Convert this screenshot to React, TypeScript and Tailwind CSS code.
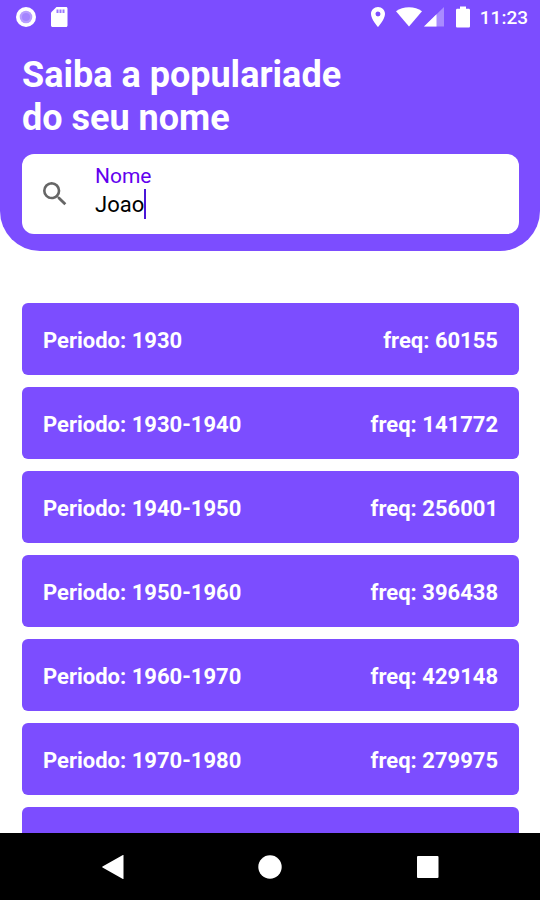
import React from "react";
import { MdLocationOn, MdSearch } from "react-icons/md";

interface Period {
  label: string;
  freq: number;
}

const periods: Period[] = [
  { label: "1930", freq: 60155 },
  { label: "1930-1940", freq: 141772 },
  { label: "1940-1950", freq: 256001 },
  { label: "1950-1960", freq: 396438 },
  { label: "1960-1970", freq: 429148 },
  { label: "1970-1980", freq: 279975 },
];

function StatusBar() {
  return (
    <div className="flex h-9 items-center justify-between pl-4 pr-3 text-white">
      <div className="flex items-center gap-3.5 pb-0.5">
        <svg className="size-5" viewBox="0 0 20 20">
          <circle cx="10" cy="10" r="10" fill="#fff" />
          <circle cx="10" cy="10" r="6.3" fill="#b89eff" />
          <circle cx="10" cy="10" r="4" fill="#a485ff" />
        </svg>
        <svg className="h-5 w-[18px]" viewBox="0 0 18 20">
          <path d="M6.500 0H16c.9 0 1.500.7 1.500 1.500v17c0 .8-.6 1.500-1.500 1.500H2.500C1.700 20 1 19.300 1 18.500V5.500z" fill="#fff" />
          <path d="M6.500 2.500h2v3.500h-2zM9.500 2.500h2v3.500h-2zM12.500 2.500h2v3.500h-2z" fill="#9a78ff" />
        </svg>
      </div>
      <div className="flex items-center">
        <div className="flex items-center pb-0.5">
          <MdLocationOn className="mr-1.5 size-6" />
          <svg className="mr-0.5 h-5 w-[26px]" viewBox="0 0 26 20" fill="currentColor">
            <path d="M13 19.5 0 4.2C3.6 1.6 8 .3 13 .3s9.4 1.3 13 3.9z" />
          </svg>
          <svg className="mr-3 h-5 w-5" viewBox="0 0 20 20" fill="currentColor">
            <path d="M20 0v19.5H0z" opacity=".35" />
            <path d="M12.5 7.3v12.2H0z" />
          </svg>
          <svg className="mr-2.5 h-[22px] w-3.5" viewBox="0 0 14 22" fill="currentColor">
            <path d="M4 .5h6v2.2h2.7c.7 0 1.3.6 1.3 1.3v16.2c0 .7-.6 1.3-1.3 1.3H1.3C.6 21.5 0 20.9 0 20.2V4c0-.7.6-1.3 1.3-1.3H4z" />
          </svg>
        </div>
        <span className="text-[19px] font-medium leading-6">11:23</span>
      </div>
    </div>
  );
}

function NavBar() {
  return (
    <nav className="flex h-[67px] shrink-0 items-center justify-center gap-[134px] bg-black">
      <button aria-label="Voltar">
        <svg className="size-6" viewBox="0 0 24 24" fill="#fff">
          <path d="M23.5.3v23.4c0 .3-.3.4-.6.3L2.5 12.5c-.4-.2-.4-.8 0-1L22.9 0c.3-.1.6 0 .6.3z" />
        </svg>
      </button>
      <button aria-label="Início">
        <svg className="size-6" viewBox="0 0 24 24" fill="#fff">
          <circle cx="12" cy="12" r="11.7" />
        </svg>
      </button>
      <button aria-label="Recentes">
        <svg className="size-6" viewBox="0 0 24 24" fill="#fff">
          <rect x="1" y="1" width="21.5" height="22" rx="1" />
        </svg>
      </button>
    </nav>
  );
}

function App() {
  return (
    <div className="flex h-screen flex-col overflow-hidden bg-white font-[Roboto,sans-serif]">
      <header className="shrink-0 rounded-b-[40px] bg-[#7c4dff] pb-[17px]">
        <StatusBar />
        <div className="pl-[22px] pr-[21px] pt-[18px]">
          <h1 className="text-4xl font-bold leading-[43px] text-white">
            Saiba a populariade
            <br />
            do seu nome
          </h1>
          <div className="mt-3.5 flex h-20 items-center rounded-xl bg-white pl-[17px]">
            <MdSearch className="size-8 text-[#666666]" />
            <div className="ml-6 flex flex-col pb-1">
              <label htmlFor="nome" className="text-[21px] leading-6 text-[#6200ee]">
                Nome
              </label>
              <div className="flex items-center">
                <input
                  id="nome"
                  type="text"
                  defaultValue="Joao"
                  className="field-sizing-content h-8 text-[22px] text-black caret-transparent outline-none"
                />
                <span className="h-[30px] w-0.5 bg-[#4a16d8]" />
              </div>
            </div>
          </div>
        </div>
      </header>
      <main className="min-h-0 flex-1 overflow-hidden pl-[22px] pr-[21px] pt-[52px]">
        <ul className="flex flex-col gap-3">
          {periods.map((period) => (
            <li
              key={period.label}
              className="flex h-[72px] items-center justify-between rounded-md bg-[#7c4dff] px-[21px] pt-0.5 text-[22px] font-bold text-white"
            >
              <span>Periodo: {period.label}</span>
              <span>freq: {period.freq}</span>
            </li>
          ))}
          <li className="h-[72px] rounded-md bg-[#7c4dff]" />
        </ul>
      </main>
      <NavBar />
    </div>
  );
}

export default App;
